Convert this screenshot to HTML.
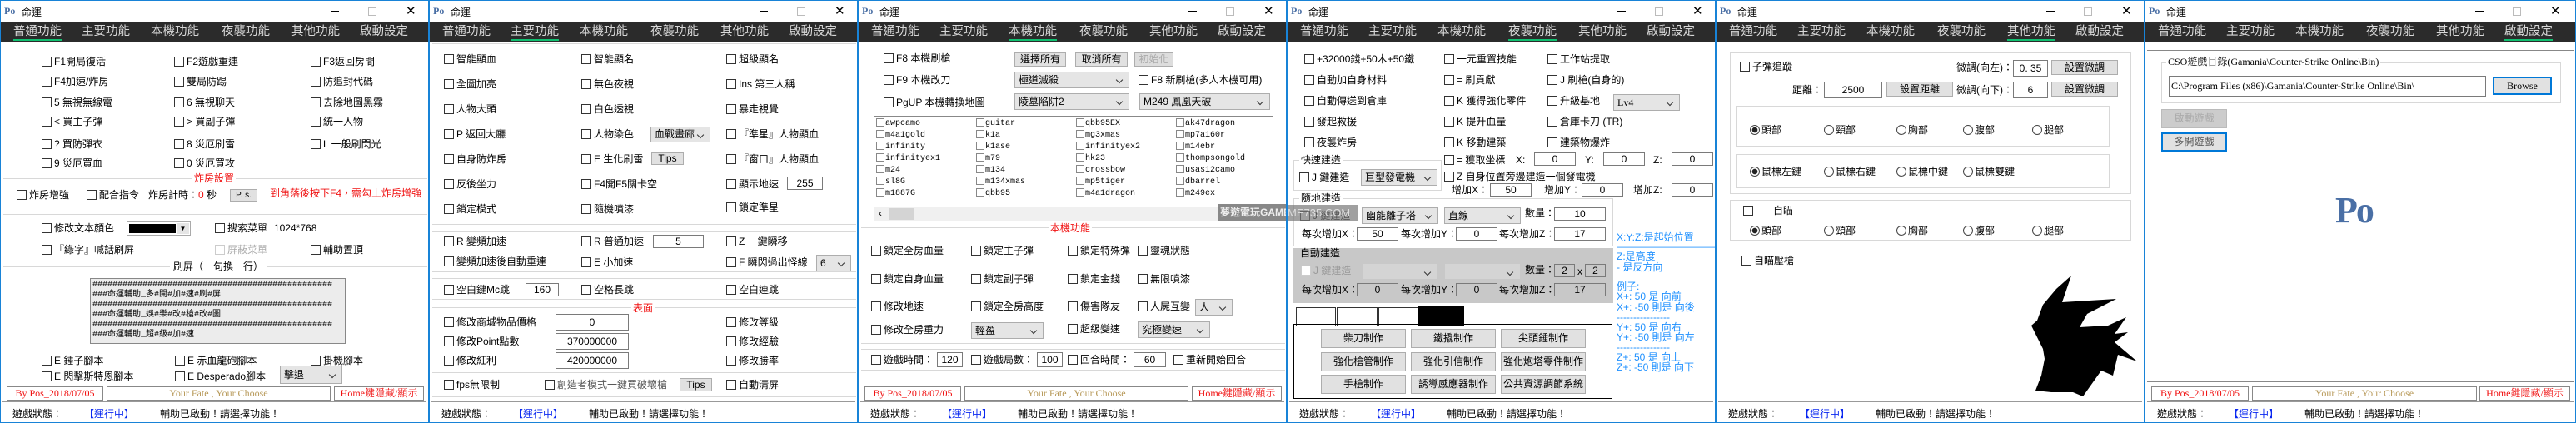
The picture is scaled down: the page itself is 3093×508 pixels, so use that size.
<!DOCTYPE html>
<html><head><meta charset="utf-8">
<style>
*{box-sizing:border-box}
body{margin:0;width:3093px;height:508px;background:#fff;position:relative;overflow:hidden;font-family:"Liberation Sans","Noto Sans CJK TC",sans-serif;color:#000}
.w{position:absolute;top:0;width:515px;height:508px;border:1px solid #1883d7;background:#fff;overflow:hidden}
.w p{position:absolute;margin:0;white-space:nowrap;font-size:12px;line-height:14px}
i.c{display:inline-block;width:12px;height:12px;border:1px solid #333;vertical-align:-2px;margin-right:3px;background:#fff}
i.c.g{border-color:#ccc}
i.r{display:inline-block;width:12px;height:12px;border:1px solid #444;border-radius:50%;vertical-align:-2px;margin-right:2px;background:#fff}
i.r.on{background:radial-gradient(circle,#222 3px,#fff 3.6px)}
.tb{position:absolute;left:0;top:0;width:100%;height:25px}
.po{position:absolute;left:4px;top:5px;font:bold 12px "Liberation Serif",serif;color:#4a6fa5}
.tt{position:absolute;left:25px;top:5px;font-size:12px}
.mn{position:absolute;left:396px;top:12px;width:10px;height:1px;background:#000}
.mx{position:absolute;left:441px;top:8px;width:10px;height:10px;border:1px solid #bbb}
.cl{position:absolute;left:486px;top:3px;font-size:15px}
.tabs{position:absolute;left:0;top:25px;width:100%;height:25px;background:#2b2b2b}
.tabs span{position:absolute;top:4px;font-size:14.5px;line-height:17px;color:#d8d8d8}
.tabs span.a{border-bottom:2px solid #10c070}
.sb{position:absolute;left:2px;top:481px;width:509px;height:24px;border-top:1px solid #999;border-bottom:1px solid #999;background:#fff}
.sb span{position:absolute;top:5px;font-size:12px}
.bl{color:#0a28f0}
.hl{position:absolute;height:1px;background:#d8d8d8}
.t{position:absolute;border:1px solid #7a7a7a;background:#fff;text-align:center;font-size:12px}
.b{position:absolute;border:1px solid #adadad;background:#e1e1e1;text-align:center;font-size:12px}
.d{position:absolute;border:1px solid #adadad;background:#e5e5e5;font-size:12px;padding-left:4px}
.d::after{content:"";position:absolute;right:8px;top:35%;width:5px;height:5px;border-right:1px solid #333;border-bottom:1px solid #333;transform:rotate(45deg)}
.red{color:#f01010}
.ft{position:absolute;top:463px;height:17px;border:1px solid #888;font:12px "Liberation Serif",serif;line-height:15px;text-align:center}
.gb{position:absolute;border:1px solid #d8d8d8}
.m{font-family:"Liberation Mono","Noto Sans CJK TC",monospace}
.lb p{font-size:10px!important;line-height:12px!important}
.lb i.c{width:10px;height:10px;margin-right:1px;border-color:#888}
.blu p{color:#1e90ff}
</style></head><body>

<!-- PANEL 1 -->
<div class="w" style="left:0">
<div class="tb"><span class="po">Po</span><span class="tt">命運</span><span class="mn"></span><span class="mx"></span><span class="cl">✕</span></div>
<div class="tabs"><span class="a" style="left:15px">普通功能</span><span style="left:97px">主要功能</span><span style="left:180px">本機功能</span><span style="left:265px">夜襲功能</span><span style="left:349px">其他功能</span><span style="left:431px">啟動設定</span></div>
<div class="hl" style="left:3px;top:55px;width:509px"></div>
<p style="left:49px;top:66px"><i class="c"></i>F1開局復活</p><p style="left:208px;top:66px"><i class="c"></i>F2遊戲重連</p><p style="left:372px;top:66px"><i class="c"></i>F3返回房間</p>
<p style="left:49px;top:90px"><i class="c"></i>F4加速/炸房</p><p style="left:208px;top:90px"><i class="c"></i>雙局防踢</p><p style="left:372px;top:90px"><i class="c"></i>防追封代碼</p>
<p style="left:49px;top:115px"><i class="c"></i>5 無視無線電</p><p style="left:208px;top:115px"><i class="c"></i>6 無視聊天</p><p style="left:372px;top:115px"><i class="c"></i>去除地圖黑霧</p>
<p style="left:49px;top:138px"><i class="c"></i>&lt; 買主子彈</p><p style="left:208px;top:138px"><i class="c"></i>&gt; 買副子彈</p><p style="left:372px;top:138px"><i class="c"></i>統一人物</p>
<p style="left:49px;top:165px"><i class="c"></i>? 買防彈衣</p><p style="left:208px;top:165px"><i class="c"></i>8 災厄刷雷</p><p style="left:372px;top:165px"><i class="c"></i>L 一般刷閃光</p>
<p style="left:49px;top:188px"><i class="c"></i>9 災厄買血</p><p style="left:208px;top:188px"><i class="c"></i>0 災厄買攻</p>
<div class="hl" style="left:3px;top:213px;width:509px"></div>
<p class="red" style="left:230px;top:206px;background:#fff;padding:0 2px">炸房設置</p>
<p style="left:19px;top:226px"><i class="c"></i>炸房增強</p><p style="left:103px;top:226px"><i class="c"></i>配合指令</p>
<p style="left:177px;top:226px">炸房計時：<span class="red">0</span> 秒</p>
<div class="b" style="left:275px;top:226px;width:33px;height:15px;font-size:10px;line-height:13px">P. s.</div>
<p class="red" style="left:323px;top:224px">到角落後按下F4，需勾上炸房增強</p>
<div class="hl" style="left:3px;top:247px;width:509px"></div>
<div class="hl" style="left:3px;top:256px;width:509px"></div>
<p style="left:49px;top:266px"><i class="c"></i>修改文本顏色</p>
<div style="position:absolute;left:151px;top:265px;width:77px;height:17px;border:1px solid #aaa;background:#fff"><div style="position:absolute;left:2px;top:2px;width:56px;height:11px;background:#000"></div><div style="position:absolute;right:1px;top:1px;width:15px;height:13px;background:#e5e5e5;font-size:8px;text-align:center;line-height:13px">▼</div></div>
<p style="left:257px;top:266px"><i class="c"></i>搜索菜單</p><p style="left:328px;top:266px">1024*768</p>
<p style="left:49px;top:292px"><i class="c"></i>『綠字』喊話刷屏</p><p style="left:257px;top:292px;color:#aaa"><i class="c g"></i>屏蔽菜單</p><p style="left:372px;top:292px"><i class="c"></i>輔助置頂</p>
<div class="hl" style="left:3px;top:319px;width:509px"></div>
<p style="left:203px;top:312px;background:#fff;padding:0 4px">刷屏（一句換一行）</p>
<div style="position:absolute;left:107px;top:333px;width:307px;height:79px;background:#ececec;border:1px solid #888;padding:2px 0 0 2px;font:10px/12px 'Liberation Mono','Noto Sans CJK TC',monospace;white-space:pre;overflow:hidden">################################################
###命運輔助_多#開#加#速#刷#屏
################################################
###命運輔助_娛#樂#改#槍#改#圖
################################################
###命運輔助_超#級#加#速</div>
<div class="hl" style="left:3px;top:420px;width:509px"></div>
<p style="left:49px;top:425px"><i class="c"></i>E 錘子腳本</p><p style="left:209px;top:425px"><i class="c"></i>E 赤血龍砲腳本</p><p style="left:372px;top:425px"><i class="c"></i>掛機腳本</p>
<p style="left:49px;top:444px"><i class="c"></i>E 閃擊斯特恩腳本</p><p style="left:209px;top:444px"><i class="c"></i>E Desperado腳本</p>
<div class="d" style="left:335px;top:438px;width:75px;height:22px;line-height:20px">擊退</div>
<div class="ft red" style="left:7px;width:116px">By Pos_2018/07/05</div>
<div class="ft" style="left:127px;width:269px;color:#b89a5a">Your Fate , Your Choose</div>
<div class="ft red" style="left:400px;width:108px;font-family:'Liberation Serif','Noto Serif CJK SC',serif">Home鍵隱藏/顯示</div>
<div class="sb"><span style="left:12px">遊戲狀態：</span><span class="bl" style="left:98px">【運行中】</span><span style="left:189px">輔助已啟動！請選擇功能！</span></div>
</div>

<!-- PANEL 2 -->
<div class="w" style="left:515px">
<div class="tb"><span class="po">Po</span><span class="tt">命運</span><span class="mn"></span><span class="mx"></span><span class="cl">✕</span></div>
<div class="tabs"><span style="left:15px">普通功能</span><span class="a" style="left:97px">主要功能</span><span style="left:180px">本機功能</span><span style="left:265px">夜襲功能</span><span style="left:349px">其他功能</span><span style="left:431px">啟動設定</span></div>
<div class="hl" style="left:3px;top:51px;width:509px"></div>
<p style="left:17px;top:63px"><i class="c"></i>智能顯血</p><p style="left:182px;top:63px"><i class="c"></i>智能顯名</p><p style="left:356px;top:63px"><i class="c"></i>超級顯名</p>
<p style="left:17px;top:93px"><i class="c"></i>全圖加亮</p><p style="left:182px;top:93px"><i class="c"></i>無色夜視</p><p style="left:356px;top:93px"><i class="c"></i>Ins 第三人稱</p>
<p style="left:17px;top:123px"><i class="c"></i>人物大頭</p><p style="left:182px;top:123px"><i class="c"></i>白色透視</p><p style="left:356px;top:123px"><i class="c"></i>暴走視覺</p>
<p style="left:17px;top:153px"><i class="c"></i>P 返回大廳</p><p style="left:182px;top:153px"><i class="c"></i>人物染色</p><p style="left:356px;top:153px"><i class="c"></i>『準星』人物顯血</p>
<div class="d" style="left:265px;top:151px;width:72px;height:19px;line-height:17px">血戰畫廊</div>
<p style="left:17px;top:183px"><i class="c"></i>自身防炸房</p><p style="left:182px;top:183px"><i class="c"></i>E 生化刷雷</p><p style="left:356px;top:183px"><i class="c"></i>『窗口』人物顯血</p>
<div class="b" style="left:266px;top:182px;width:39px;height:15px;line-height:13px">Tips</div>
<p style="left:17px;top:213px"><i class="c"></i>反後坐力</p><p style="left:182px;top:213px"><i class="c"></i>F4開F5關卡空</p><p style="left:356px;top:213px"><i class="c"></i>顯示地速</p>
<div class="t" style="left:429px;top:211px;width:43px;height:16px;line-height:14px">255</div>
<p style="left:17px;top:243px"><i class="c"></i>鎖定模式</p><p style="left:182px;top:243px"><i class="c"></i>隨機噴漆</p><p style="left:356px;top:241px"><i class="c"></i>鎖定準星</p>
<div class="hl" style="left:3px;top:268px;width:509px"></div><div class="hl" style="left:3px;top:277px;width:509px"></div>
<p style="left:17px;top:282px"><i class="c"></i>R 變頻加速</p><p style="left:182px;top:282px"><i class="c"></i>R 普通加速</p><p style="left:356px;top:282px"><i class="c"></i>Z 一鍵瞬移</p>
<div class="t" style="left:268px;top:281px;width:61px;height:16px;line-height:14px">5</div>
<p style="left:17px;top:306px"><i class="c"></i>變頻加速後自動重連</p><p style="left:182px;top:307px"><i class="c"></i>E 小加速</p><p style="left:356px;top:307px"><i class="c"></i>F 瞬閃過出怪線</p>
<div class="d" style="left:464px;top:305px;width:42px;height:20px;line-height:18px">6</div>
<div class="hl" style="left:3px;top:325px;width:509px"></div><div class="hl" style="left:3px;top:333px;width:509px"></div>
<p style="left:17px;top:340px"><i class="c"></i>空白鍵Mc跳</p><p style="left:182px;top:340px"><i class="c"></i>空格長跳</p><p style="left:356px;top:340px"><i class="c"></i>空白連跳</p>
<div class="t" style="left:115px;top:339px;width:40px;height:16px;line-height:14px">160</div>
<div class="hl" style="left:3px;top:358px;width:509px"></div><div class="hl" style="left:3px;top:368px;width:509px"></div>
<p class="red" style="left:242px;top:362px;background:#fff;padding:0 2px">表面</p>
<p style="left:17px;top:379px"><i class="c"></i>修改商城物品價格</p><p style="left:356px;top:379px"><i class="c"></i>修改等級</p>
<div class="t" style="left:151px;top:376px;width:88px;height:20px;line-height:18px">0</div>
<p style="left:17px;top:402px"><i class="c"></i>修改Point點數</p><p style="left:356px;top:402px"><i class="c"></i>修改經驗</p>
<div class="t" style="left:151px;top:399px;width:88px;height:20px;line-height:18px">370000000</div>
<p style="left:17px;top:425px"><i class="c"></i>修改紅利</p><p style="left:356px;top:425px"><i class="c"></i>修改勝率</p>
<div class="t" style="left:151px;top:422px;width:88px;height:20px;line-height:18px">420000000</div>
<div class="hl" style="left:3px;top:446px;width:509px"></div>
<p style="left:17px;top:454px"><i class="c"></i>fps無限制</p><p style="left:138px;top:454px;color:#555"><i class="c"></i>創造者模式一鍵買破壞槍</p><p style="left:356px;top:454px"><i class="c"></i>自動清屏</p>
<div class="b" style="left:300px;top:453px;width:39px;height:16px;line-height:14px">Tips</div>
<div class="hl" style="left:3px;top:475px;width:509px"></div>
<div class="sb"><span style="left:12px">遊戲狀態：</span><span class="bl" style="left:98px">【運行中】</span><span style="left:189px">輔助已啟動！請選擇功能！</span></div>
</div>

<!-- PANEL 3 -->
<div class="w" style="left:1030px">
<div class="tb"><span class="po">Po</span><span class="tt">命運</span><span class="mn"></span><span class="mx"></span><span class="cl">✕</span></div>
<div class="tabs"><span style="left:15px">普通功能</span><span style="left:97px">主要功能</span><span class="a" style="left:180px">本機功能</span><span style="left:265px">夜襲功能</span><span style="left:349px">其他功能</span><span style="left:431px">啟動設定</span></div>
<p style="left:30px;top:62px"><i class="c"></i>F8 本機刷槍</p>
<div class="b" style="left:187px;top:62px;width:62px;height:17px;line-height:15px">選擇所有</div>
<div class="b" style="left:260px;top:62px;width:63px;height:17px;line-height:15px">取消所有</div>
<div class="b" style="left:331px;top:62px;width:47px;height:17px;line-height:15px;color:#aaa;background:#ddd">初始化</div>
<p style="left:30px;top:88px"><i class="c"></i>F9 本機改刀</p>
<div class="d" style="left:187px;top:85px;width:138px;height:20px;line-height:18px">極道滅殺</div>
<p style="left:336px;top:88px"><i class="c"></i>F8 新刷槍(多人本機可用)</p>
<p style="left:30px;top:115px"><i class="c"></i>PgUP 本機轉換地圖</p>
<div class="d" style="left:187px;top:111px;width:138px;height:20px;line-height:18px">陵墓陷阱2</div>
<div class="d" style="left:337px;top:111px;width:157px;height:20px;line-height:18px">M249 鳳凰天破</div>
<div class="lb" style="position:absolute;left:18px;top:138px;width:480px;height:127px;border:1px solid #888">
<p class="m" style="left:2px;top:2px"><i class="c"></i>awpcamo</p><p class="m" style="left:122px;top:2px"><i class="c"></i>guitar</p><p class="m" style="left:242px;top:2px"><i class="c"></i>qbb95EX</p><p class="m" style="left:362px;top:2px"><i class="c"></i>ak47dragon</p>
<p class="m" style="left:2px;top:16px"><i class="c"></i>m4a1gold</p><p class="m" style="left:122px;top:16px"><i class="c"></i>k1a</p><p class="m" style="left:242px;top:16px"><i class="c"></i>mg3xmas</p><p class="m" style="left:362px;top:16px"><i class="c"></i>mp7a160r</p>
<p class="m" style="left:2px;top:30px"><i class="c"></i>infinity</p><p class="m" style="left:122px;top:30px"><i class="c"></i>k1ase</p><p class="m" style="left:242px;top:30px"><i class="c"></i>infinityex2</p><p class="m" style="left:362px;top:30px"><i class="c"></i>m14ebr</p>
<p class="m" style="left:2px;top:44px"><i class="c"></i>infinityex1</p><p class="m" style="left:122px;top:44px"><i class="c"></i>m79</p><p class="m" style="left:242px;top:44px"><i class="c"></i>hk23</p><p class="m" style="left:362px;top:44px"><i class="c"></i>thompsongold</p>
<p class="m" style="left:2px;top:58px"><i class="c"></i>m24</p><p class="m" style="left:122px;top:58px"><i class="c"></i>m134</p><p class="m" style="left:242px;top:58px"><i class="c"></i>crossbow</p><p class="m" style="left:362px;top:58px"><i class="c"></i>usas12camo</p>
<p class="m" style="left:2px;top:72px"><i class="c"></i>sl8G</p><p class="m" style="left:122px;top:72px"><i class="c"></i>m134xmas</p><p class="m" style="left:242px;top:72px"><i class="c"></i>mp5tiger</p><p class="m" style="left:362px;top:72px"><i class="c"></i>dbarrel</p>
<p class="m" style="left:2px;top:86px"><i class="c"></i>m1887G</p><p class="m" style="left:122px;top:86px"><i class="c"></i>qbb95</p><p class="m" style="left:242px;top:86px"><i class="c"></i>m4a1dragon</p><p class="m" style="left:362px;top:86px"><i class="c"></i>m249ex</p>
<div style="position:absolute;left:0;top:109px;width:478px;height:16px;background:#f0f0f0"></div>
<div style="position:absolute;left:18px;top:110px;width:30px;height:14px;background:#d4d4d4"></div>
<div style="position:absolute;left:5px;top:109px;font-size:12px">‹</div>
</div>
<div style="position:absolute;left:431px;top:244px;width:90px;height:20px;background:#888;color:#eee;font-size:12px;line-height:20px;padding-left:3px;font-weight:bold">夢遊電玩GAME</div>
<div class="hl" style="left:3px;top:272px;width:509px"></div>
<p class="red" style="left:228px;top:266px;background:#fff;padding:0 2px">本機功能</p>
<p style="left:15px;top:293px"><i class="c"></i>鎖定全房血量</p><p style="left:135px;top:293px"><i class="c"></i>鎖定主子彈</p><p style="left:251px;top:293px"><i class="c"></i>鎖定特殊彈</p><p style="left:335px;top:293px"><i class="c"></i>靈魂狀態</p>
<p style="left:15px;top:327px"><i class="c"></i>鎖定自身血量</p><p style="left:135px;top:327px"><i class="c"></i>鎖定副子彈</p><p style="left:251px;top:327px"><i class="c"></i>鎖定金錢</p><p style="left:335px;top:327px"><i class="c"></i>無限噴漆</p>
<p style="left:15px;top:360px"><i class="c"></i>修改地速</p><p style="left:135px;top:360px"><i class="c"></i>鎖定全房高度</p><p style="left:251px;top:360px"><i class="c"></i>傷害隊友</p><p style="left:335px;top:360px"><i class="c"></i>人屍互變</p>
<div class="d" style="left:404px;top:358px;width:45px;height:20px;line-height:18px">人</div>
<p style="left:15px;top:388px"><i class="c"></i>修改全房重力</p><p style="left:251px;top:387px"><i class="c"></i>超級變速</p>
<div class="d" style="left:135px;top:386px;width:87px;height:20px;line-height:18px">輕盈</div>
<div class="d" style="left:335px;top:385px;width:87px;height:20px;line-height:18px">究極變速</div>
<div class="hl" style="left:3px;top:411px;width:509px"></div><div class="hl" style="left:3px;top:418px;width:509px"></div>
<p style="left:15px;top:424px"><i class="c"></i>遊戲時間：</p><p style="left:135px;top:424px"><i class="c"></i>遊戲局數：</p><p style="left:251px;top:424px"><i class="c"></i>回合時間：</p><p style="left:378px;top:424px"><i class="c"></i>重新開始回合</p>
<div class="t" style="left:94px;top:422px;width:31px;height:18px;line-height:16px">120</div>
<div class="t" style="left:214px;top:422px;width:31px;height:18px;line-height:16px">100</div>
<div class="t" style="left:330px;top:422px;width:39px;height:18px;line-height:16px">60</div>
<div class="hl" style="left:3px;top:443px;width:509px"></div>
<div class="ft red" style="left:7px;width:116px">By Pos_2018/07/05</div>
<div class="ft" style="left:127px;width:269px;color:#b89a5a">Your Fate , Your Choose</div>
<div class="ft red" style="left:400px;width:108px;font-family:'Liberation Serif','Noto Serif CJK SC',serif">Home鍵隱藏/顯示</div>
<div class="sb"><span style="left:12px">遊戲狀態：</span><span class="bl" style="left:98px">【運行中】</span><span style="left:189px">輔助已啟動！請選擇功能！</span></div>
</div>

<!-- PANEL 4 -->
<div class="w" style="left:1545px">
<div class="tb"><span class="po">Po</span><span class="tt">命運</span><span class="mn"></span><span class="mx"></span><span class="cl">✕</span></div>
<div class="tabs"><span style="left:15px">普通功能</span><span style="left:97px">主要功能</span><span style="left:180px">本機功能</span><span class="a" style="left:265px">夜襲功能</span><span style="left:349px">其他功能</span><span style="left:431px">啟動設定</span></div>
<p style="left:20px;top:63px"><i class="c"></i>+32000錢+50木+50鐵</p><p style="left:188px;top:63px"><i class="c"></i>一元重置技能</p><p style="left:312px;top:63px"><i class="c"></i>工作站提取</p>
<p style="left:20px;top:88px"><i class="c"></i>自動加自身材料</p><p style="left:188px;top:88px"><i class="c"></i>= 刷貢獻</p><p style="left:312px;top:88px"><i class="c"></i>J 刷槍(自身的)</p>
<p style="left:20px;top:113px"><i class="c"></i>自動傳送到倉庫</p><p style="left:188px;top:113px"><i class="c"></i>K 獲得強化零件</p><p style="left:312px;top:113px"><i class="c"></i>升級基地</p>
<div class="d" style="left:391px;top:112px;width:80px;height:20px;line-height:18px;font-family:'Liberation Serif',serif">Lv4</div>
<p style="left:20px;top:138px"><i class="c"></i>發起救援</p><p style="left:188px;top:138px"><i class="c"></i>K 提升血量</p><p style="left:312px;top:138px"><i class="c"></i>倉庫卡刀 (TR)</p>
<p style="left:20px;top:163px"><i class="c"></i>夜襲炸房</p><p style="left:188px;top:163px"><i class="c"></i>K 移動建築</p><p style="left:312px;top:163px"><i class="c"></i>建築物爆炸</p>
<div class="gb" style="left:7px;top:191px;width:178px;height:37px"></div>
<p style="left:14px;top:184px;background:#fff;padding:0 2px">快速建造</p>
<p style="left:14px;top:205px"><i class="c"></i>J 鍵建造</p>
<div class="d" style="left:88px;top:202px;width:92px;height:20px;line-height:18px">巨型發電機</div>
<p style="left:188px;top:184px"><i class="c"></i>= 獲取坐標</p>
<p style="left:274px;top:184px">X:</p><div class="t" style="left:296px;top:182px;width:50px;height:16px;line-height:14px">0</div>
<p style="left:357px;top:184px">Y:</p><div class="t" style="left:379px;top:182px;width:50px;height:16px;line-height:14px">0</div>
<p style="left:439px;top:184px">Z:</p><div class="t" style="left:461px;top:182px;width:50px;height:16px;line-height:14px">0</div>
<p style="left:188px;top:204px"><i class="c"></i>Z 自身位置旁邊建造一個發電機</p>
<p style="left:197px;top:220px">增加X：</p><div class="t" style="left:243px;top:219px;width:50px;height:16px;line-height:14px">50</div>
<p style="left:308px;top:220px">增加Y：</p><div class="t" style="left:353px;top:219px;width:50px;height:16px;line-height:14px">0</div>
<p style="left:415px;top:220px">增加Z:</p><div class="t" style="left:461px;top:219px;width:50px;height:16px;line-height:14px">0</div>
<div class="gb" style="left:7px;top:237px;width:384px;height:58px"></div>
<p style="left:14px;top:230px;background:#fff;padding:0 2px">隨地建造</p>
<p style="left:15px;top:251px"><i class="c"></i>J 鍵建造</p>
<div style="position:absolute;left:0;top:245px;width:85px;height:19px;background:rgba(120,120,120,.7);color:#ddd;font-size:13px;line-height:19px">ME735.COM</div>
<div class="d" style="left:89px;top:248px;width:92px;height:20px;line-height:18px">幽能離子塔</div>
<div class="d" style="left:188px;top:248px;width:92px;height:20px;line-height:18px">直線</div>
<p style="left:285px;top:248px">數量：</p><div class="t" style="left:320px;top:248px;width:62px;height:16px;line-height:14px">10</div>
<p style="left:17px;top:273px">每次增加X：</p><div class="t" style="left:83px;top:272px;width:50px;height:16px;line-height:14px">50</div>
<p style="left:136px;top:273px">每次增加Y：</p><div class="t" style="left:202px;top:272px;width:50px;height:16px;line-height:14px">0</div>
<p style="left:254px;top:273px">每次增加Z：</p><div class="t" style="left:320px;top:272px;width:62px;height:16px;line-height:14px">17</div>
<div style="position:absolute;left:7px;top:297px;width:384px;height:66px;background:#c8c8c8"></div>
<p style="left:15px;top:296px">自動建造</p>
<p style="left:16px;top:317px;color:#999"><i class="c g"></i>J 鍵建造</p>
<div class="d" style="left:90px;top:316px;width:90px;height:18px;background:#d4d4d4;border-color:#d4d4d4"></div>
<div class="d" style="left:189px;top:316px;width:90px;height:18px;background:#d4d4d4;border-color:#d4d4d4"></div>
<p style="left:285px;top:316px">數量：</p>
<div class="t" style="left:320px;top:316px;width:25px;height:16px;line-height:14px;background:#c8c8c8">2</div><p style="left:348px;top:318px">x</p>
<div class="t" style="left:357px;top:316px;width:25px;height:16px;line-height:14px;background:#c8c8c8">2</div>
<p style="left:17px;top:340px">每次增加X：</p><div class="t" style="left:83px;top:339px;width:50px;height:16px;line-height:14px;background:#c8c8c8">0</div>
<p style="left:136px;top:340px">每次增加Y：</p><div class="t" style="left:202px;top:339px;width:50px;height:16px;line-height:14px;background:#c8c8c8">0</div>
<p style="left:254px;top:340px">每次增加Z：</p><div class="t" style="left:320px;top:339px;width:62px;height:16px;line-height:14px;background:#c8c8c8">17</div>
<div style="position:absolute;left:10px;top:368px;width:48px;height:22px;border:1px solid #333;border-bottom:0"></div>
<div style="position:absolute;left:59px;top:368px;width:49px;height:22px;border:1px solid #333;border-bottom:0"></div>
<div style="position:absolute;left:109px;top:368px;width:48px;height:22px;border:1px solid #333;border-bottom:0"></div>
<div style="position:absolute;left:156px;top:366px;width:56px;height:24px;background:#000"></div>
<div style="position:absolute;left:7px;top:388px;width:383px;height:90px;border:1px solid #000"></div>
<div class="b" style="left:40px;top:394px;width:102px;height:23px;line-height:21px">柴刀制作</div><div class="b" style="left:148px;top:394px;width:102px;height:23px;line-height:21px">鐵撬制作</div><div class="b" style="left:256px;top:394px;width:102px;height:23px;line-height:21px">尖頭錘制作</div>
<div class="b" style="left:40px;top:422px;width:102px;height:23px;line-height:21px">強化槍管制作</div><div class="b" style="left:148px;top:422px;width:102px;height:23px;line-height:21px">強化引信制作</div><div class="b" style="left:256px;top:422px;width:102px;height:23px;line-height:21px">強化炮塔零件制作</div>
<div class="b" style="left:40px;top:449px;width:102px;height:23px;line-height:21px">手槍制作</div><div class="b" style="left:148px;top:449px;width:102px;height:23px;line-height:21px">誘導感應器制作</div><div class="b" style="left:256px;top:449px;width:102px;height:23px;line-height:21px">公共資源調節系統</div>
<div class="blu">
<p style="left:395px;top:277px">X:Y:Z:是起始位置</p><p style="left:395px;top:288px">———————————</p>
<p style="left:395px;top:300px">Z:是高度</p><p style="left:395px;top:313px">- 是反方向</p>
<p style="left:395px;top:336px">例子:</p><p style="left:395px;top:348px">X+: 50 是 向前</p><p style="left:395px;top:361px">X+: -50 則是 向後</p>
<p style="left:395px;top:373px">----------------</p>
<p style="left:395px;top:385px">Y+: 50 是 向右</p><p style="left:395px;top:397px">Y+: -50 則是 向左</p>
<p style="left:395px;top:409px">----------------</p>
<p style="left:395px;top:421px">Z+: 50 是 向上</p><p style="left:395px;top:433px">Z+: -50 則是 向下</p>
</div>
<div class="sb"><span style="left:12px">遊戲狀態：</span><span class="bl" style="left:98px">【運行中】</span><span style="left:189px">輔助已啟動！請選擇功能！</span></div>
</div>

<!-- PANEL 5 -->
<div class="w" style="left:2060px">
<div class="tb"><span class="po">Po</span><span class="tt">命運</span><span class="mn"></span><span class="mx"></span><span class="cl">✕</span></div>
<div class="tabs"><span style="left:15px">普通功能</span><span style="left:97px">主要功能</span><span style="left:180px">本機功能</span><span style="left:265px">夜襲功能</span><span class="a" style="left:349px">其他功能</span><span style="left:431px">啟動設定</span></div>
<div class="gb" style="left:16px;top:62px;width:482px;height:170px"></div>
<p style="left:28px;top:72px"><i class="c"></i>子彈追蹤</p>
<p style="left:288px;top:73px">微調(向左)：</p><div class="t" style="left:356px;top:71px;width:42px;height:20px;line-height:18px">0. 35</div>
<div class="b" style="left:402px;top:71px;width:80px;height:18px;line-height:16px">設置微調</div>
<p style="left:91px;top:100px">距離：</p><div class="t" style="left:129px;top:97px;width:70px;height:20px;line-height:18px">2500</div>
<div class="b" style="left:204px;top:97px;width:80px;height:18px;line-height:16px">設置距離</div>
<p style="left:288px;top:100px">微調(向下)：</p><div class="t" style="left:356px;top:97px;width:42px;height:20px;line-height:18px">6</div>
<div class="b" style="left:402px;top:97px;width:80px;height:18px;line-height:16px">設置微調</div>
<div class="gb" style="left:24px;top:126px;width:448px;height:49px"></div>
<p style="left:40px;top:148px"><i class="r on"></i>頭部</p><p style="left:129px;top:148px"><i class="r"></i>頸部</p><p style="left:216px;top:148px"><i class="r"></i>胸部</p><p style="left:296px;top:148px"><i class="r"></i>腹部</p><p style="left:379px;top:148px"><i class="r"></i>腿部</p>
<div class="gb" style="left:24px;top:184px;width:448px;height:41px"></div>
<p style="left:40px;top:198px"><i class="r on"></i>鼠標左鍵</p><p style="left:129px;top:198px"><i class="r"></i>鼠標右鍵</p><p style="left:216px;top:198px"><i class="r"></i>鼠標中鍵</p><p style="left:296px;top:198px"><i class="r"></i>鼠標雙鍵</p>
<div class="gb" style="left:16px;top:239px;width:482px;height:49px"></div>
<p style="left:32px;top:245px"><i class="c"></i></p><p style="left:68px;top:245px">自瞄</p>
<p style="left:40px;top:269px"><i class="r on"></i>頭部</p><p style="left:129px;top:269px"><i class="r"></i>頸部</p><p style="left:216px;top:269px"><i class="r"></i>胸部</p><p style="left:296px;top:269px"><i class="r"></i>腹部</p><p style="left:379px;top:269px"><i class="r"></i>腿部</p>
<p style="left:30px;top:305px"><i class="c"></i>自瞄壓槍</p>
<svg style="position:absolute;left:0;top:0" width="515" height="508"><polygon fill="#000" points="426,330 415,362 480,358 445,376 436,392 470,390 492,380 478,400 494,398 478,410 505,433 482,425 476,450 462,444 440,475 428,470 402,470 383,468 390,450 394,430 392,418 378,390 385,384 392,365 408,346"/></svg>
<div class="sb"><span style="left:12px">遊戲狀態：</span><span class="bl" style="left:98px">【運行中】</span><span style="left:189px">輔助已啟動！請選擇功能！</span></div>
</div>

<!-- PANEL 6 -->
<div class="w" style="left:2575px;width:518px">
<div class="tb"><span class="po">Po</span><span class="tt">命運</span><span class="mn"></span><span class="mx"></span><span class="cl">✕</span></div>
<div class="tabs"><span style="left:15px">普通功能</span><span style="left:97px">主要功能</span><span style="left:180px">本機功能</span><span style="left:265px">夜襲功能</span><span style="left:349px">其他功能</span><span class="a" style="left:431px">啟動設定</span></div>
<div style="position:absolute;left:2px;top:59px;width:512px;height:1px;background:#888"></div>
<div class="gb" style="left:19px;top:74px;width:480px;height:49px"></div>
<p style="left:25px;top:66px;background:#fff;padding:0 2px;font-family:'Liberation Serif','Noto Serif CJK TC',serif">CSO遊戲目錄(Gamania\Counter-Strike Online\Bin)</p>
<div style="position:absolute;left:28px;top:90px;width:381px;height:25px;border:1px solid #7a7a7a;font:12px/23px 'Liberation Serif',serif;padding-left:2px">C:\Program Files (x86)\Gamania\Counter-Strike Online\Bin\</div>
<div class="b" style="left:417px;top:91px;width:71px;height:22px;line-height:18px;border:2px solid #0078d7;font-family:'Liberation Serif',serif">Browse</div>
<div class="b" style="left:19px;top:130px;width:79px;height:23px;line-height:21px;color:#aaa;background:#ccc;border-color:#bbb">啟動遊戲</div>
<div class="b" style="left:19px;top:158px;width:79px;height:23px;line-height:19px;border:2px solid #0078d7;color:#555">多開遊戲</div>
<div style="position:absolute;left:228px;top:226px;font:bold 44px 'Liberation Serif',serif;color:#4a6fa5;letter-spacing:-2px">Po</div>
<div style="position:absolute;left:2px;top:457px;width:512px;height:1px;background:#888"></div>
<div class="ft red" style="left:7px;width:117px">By Pos_2018/07/05</div>
<div class="ft" style="left:128px;width:270px;color:#b89a5a">Your Fate , Your Choose</div>
<div class="ft red" style="left:401px;width:109px;font-family:'Liberation Serif','Noto Serif CJK SC',serif">Home鍵隱藏/顯示</div>
<div class="sb" style="width:512px"><span style="left:12px">遊戲狀態：</span><span class="bl" style="left:98px">【運行中】</span><span style="left:189px">輔助已啟動！請選擇功能！</span></div>
</div>
</body></html>
